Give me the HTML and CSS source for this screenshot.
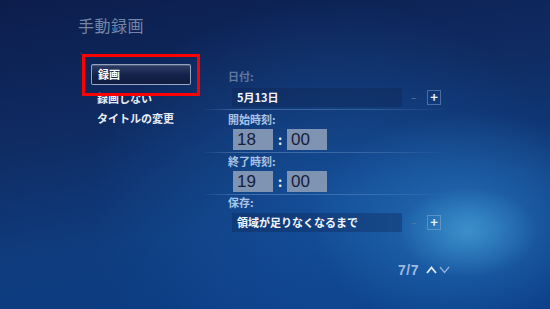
FILE: index.html
```html
<!DOCTYPE html>
<html lang="ja">
<head>
    <meta charset="UTF-8">
    <meta name="viewport" content="width=device-width, initial-scale=1.0">
    <title>手動録画</title>
    <link rel="stylesheet" href="styles.css">
</head>
<body>
    <div class="screen">
        <h1 class="title">手動録画</h1>

        <div class="main">
            <ul class="menu">
                <li class="menu-item selected">録画</li>
                <li class="menu-item">録画しない</li>
                <li class="menu-item">タイトルの変更</li>
            </ul>

            <div class="panel">
                <div class="label dim">日付:</div>
                <div class="option-row">
                    <div class="option-value">5月13日</div>
                    <span class="minus">−</span>
                    <span class="plus">+</span>
                </div>
                <div class="sep"></div>

                <div class="label start">開始時刻:</div>
                <div class="time-row">
                    <div class="time-box">18</div>
                    <span class="colon">:</span>
                    <div class="time-box">00</div>
                </div>
                <div class="sep"></div>

                <div class="label">終了時刻:</div>
                <div class="time-row">
                    <div class="time-box">19</div>
                    <span class="colon">:</span>
                    <div class="time-box">00</div>
                </div>
                <div class="sep"></div>

                <div class="label save">保存:</div>
                <div class="option-row save-row">
                    <div class="option-value">領域が足りなくなるまで</div>
                    <span class="minus">−</span>
                    <span class="plus">+</span>
                </div>

                <div class="pager">
                    <span class="page-num">7/7</span>
                    <svg class="chev" width="11" height="10" viewBox="0 0 11 10">
                        <path d="M1 8 L5.5 2.5 L10 8" fill="none" stroke="#dce8f6" stroke-width="1.8"/>
                    </svg>
                    <svg class="chev" width="11" height="10" viewBox="0 0 11 10">
                        <path d="M1 2 L5.5 7.5 L10 2" fill="none" stroke="#8fb0d8" stroke-width="1.4"/>
                    </svg>
                </div>
            </div>
        </div>

        <!-- 赤枠 (注釈) -->
        <div class="highlight"></div>
    </div>
</body>
</html>
```

FILE: styles.css
```css
html, body {
    margin: 0;
    padding: 0;
}

body {
    font-family: "Noto Sans CJK JP", "Noto Sans", sans-serif;
    background: #0d2454;
}

.screen {
    position: relative;
    width: 550px;
    height: 309px;
    overflow: hidden;
    background:
        radial-gradient(ellipse 70px 45px at 468px 232px, rgba(90, 190, 230, 0.45), rgba(90, 190, 230, 0) 100%),
        radial-gradient(ellipse 160px 110px at 470px 222px, rgba(50, 140, 215, 0.55), rgba(50, 140, 215, 0) 100%),
        radial-gradient(ellipse 240px 200px at 330px 200px, rgba(25, 95, 175, 0.55), rgba(25, 95, 175, 0) 100%),
        linear-gradient(170deg, #0c1d4c 0%, #0f2b62 35%, #0f3c7e 65%, #0a3c86 100%);
}

.title {
    margin: 0;
    padding: 15px 0 0 78px;
    font-size: 16px;
    line-height: 20px;
    font-weight: normal;
    color: #7386a8;
    letter-spacing: 0.5px;
}

.main {
    display: flex;
    padding: 29px 0 0 91px;
}

.menu {
    list-style: none;
    margin: 0;
    padding: 0;
    width: 100px;
}

.menu-item {
    height: 20px;
    line-height: 20px;
    padding-left: 6px;
    font-size: 11px;
    font-weight: bold;
    color: #e8eef8;
}

.menu-item.selected {
    box-sizing: border-box;
    height: 21px;
    line-height: 19px;
    margin-bottom: 3px;
    border: 1px solid rgba(190, 205, 230, 0.75);
    border-radius: 2px;
    background: linear-gradient(#2c3d66, #14224a 55%, #101c40);
    box-shadow: inset 0 1px 0 rgba(255, 255, 255, 0.15);
    color: #ffffff;
}

.panel {
    margin-left: 37px;
    padding-top: 6px;
    width: 215px;
}

.label {
    height: 12px;
    line-height: 12px;
    font-size: 11px;
    font-weight: bold;
    color: #a8c4e6;
    margin-top: 2px;
}

.label.dim {
    color: #62789f;
    margin-top: 0;
}

.label.start {
    margin-top: 3px;
}

.label.save {
    margin-top: 1px;
}

.option-row {
    display: flex;
    align-items: center;
    margin-top: 6px;
    height: 19px;
}

.save-row {
    margin-top: 5px;
}

.option-value {
    box-sizing: border-box;
    margin-left: 4px;
    width: 170px;
    height: 19px;
    line-height: 19px;
    padding-left: 5px;
    font-size: 11px;
    font-weight: bold;
    color: #f2f6fc;
    background: rgba(15, 35, 80, 0.35);
}

.minus {
    width: 10px;
    margin-left: 9px;
    font-size: 10px;
    color: #5677a6;
}

.plus {
    box-sizing: border-box;
    width: 14px;
    height: 15px;
    margin-left: 6px;
    border: 1px solid rgba(160, 190, 225, 0.4);
    text-align: center;
    line-height: 12px;
    font-size: 13px;
    font-weight: bold;
    color: #e6eef8;
}

.sep {
    margin: 2px 0 0 -23px;
    width: 245px;
    height: 1px;
    background: linear-gradient(90deg, rgba(140, 180, 225, 0.05), rgba(140, 180, 225, 0.4) 15%, rgba(140, 180, 225, 0.25) 70%, rgba(140, 180, 225, 0));
}

.time-row {
    display: flex;
    align-items: center;
    margin-top: 4px;
    margin-left: 5px;
}

.time-box {
    box-sizing: border-box;
    width: 40px;
    height: 21px;
    line-height: 21px;
    padding-left: 4px;
    font-family: "Liberation Sans", "Noto Sans", sans-serif;
    font-size: 17px;
    color: #17203a;
    background: #7f93b2;
}

.colon {
    width: 14px;
    text-align: center;
    font-size: 13px;
    font-weight: bold;
    color: #e8eef8;
}

.pager {
    display: flex;
    align-items: center;
    margin: 30px 0 0 170px;
    gap: 2px;
}

.chev {
    flex-shrink: 0;
}

.page-num {
    font-family: "Liberation Sans", "Noto Sans", sans-serif;
    font-size: 14px;
    font-weight: bold;
    color: #9dbbe0;
    margin-right: 5px;
    letter-spacing: 0.5px;
}

.highlight {
    position: absolute;
    left: 82px;
    top: 54px;
    width: 118px;
    height: 42px;
    box-sizing: border-box;
    border: 3px solid #ff0000;
}
```
